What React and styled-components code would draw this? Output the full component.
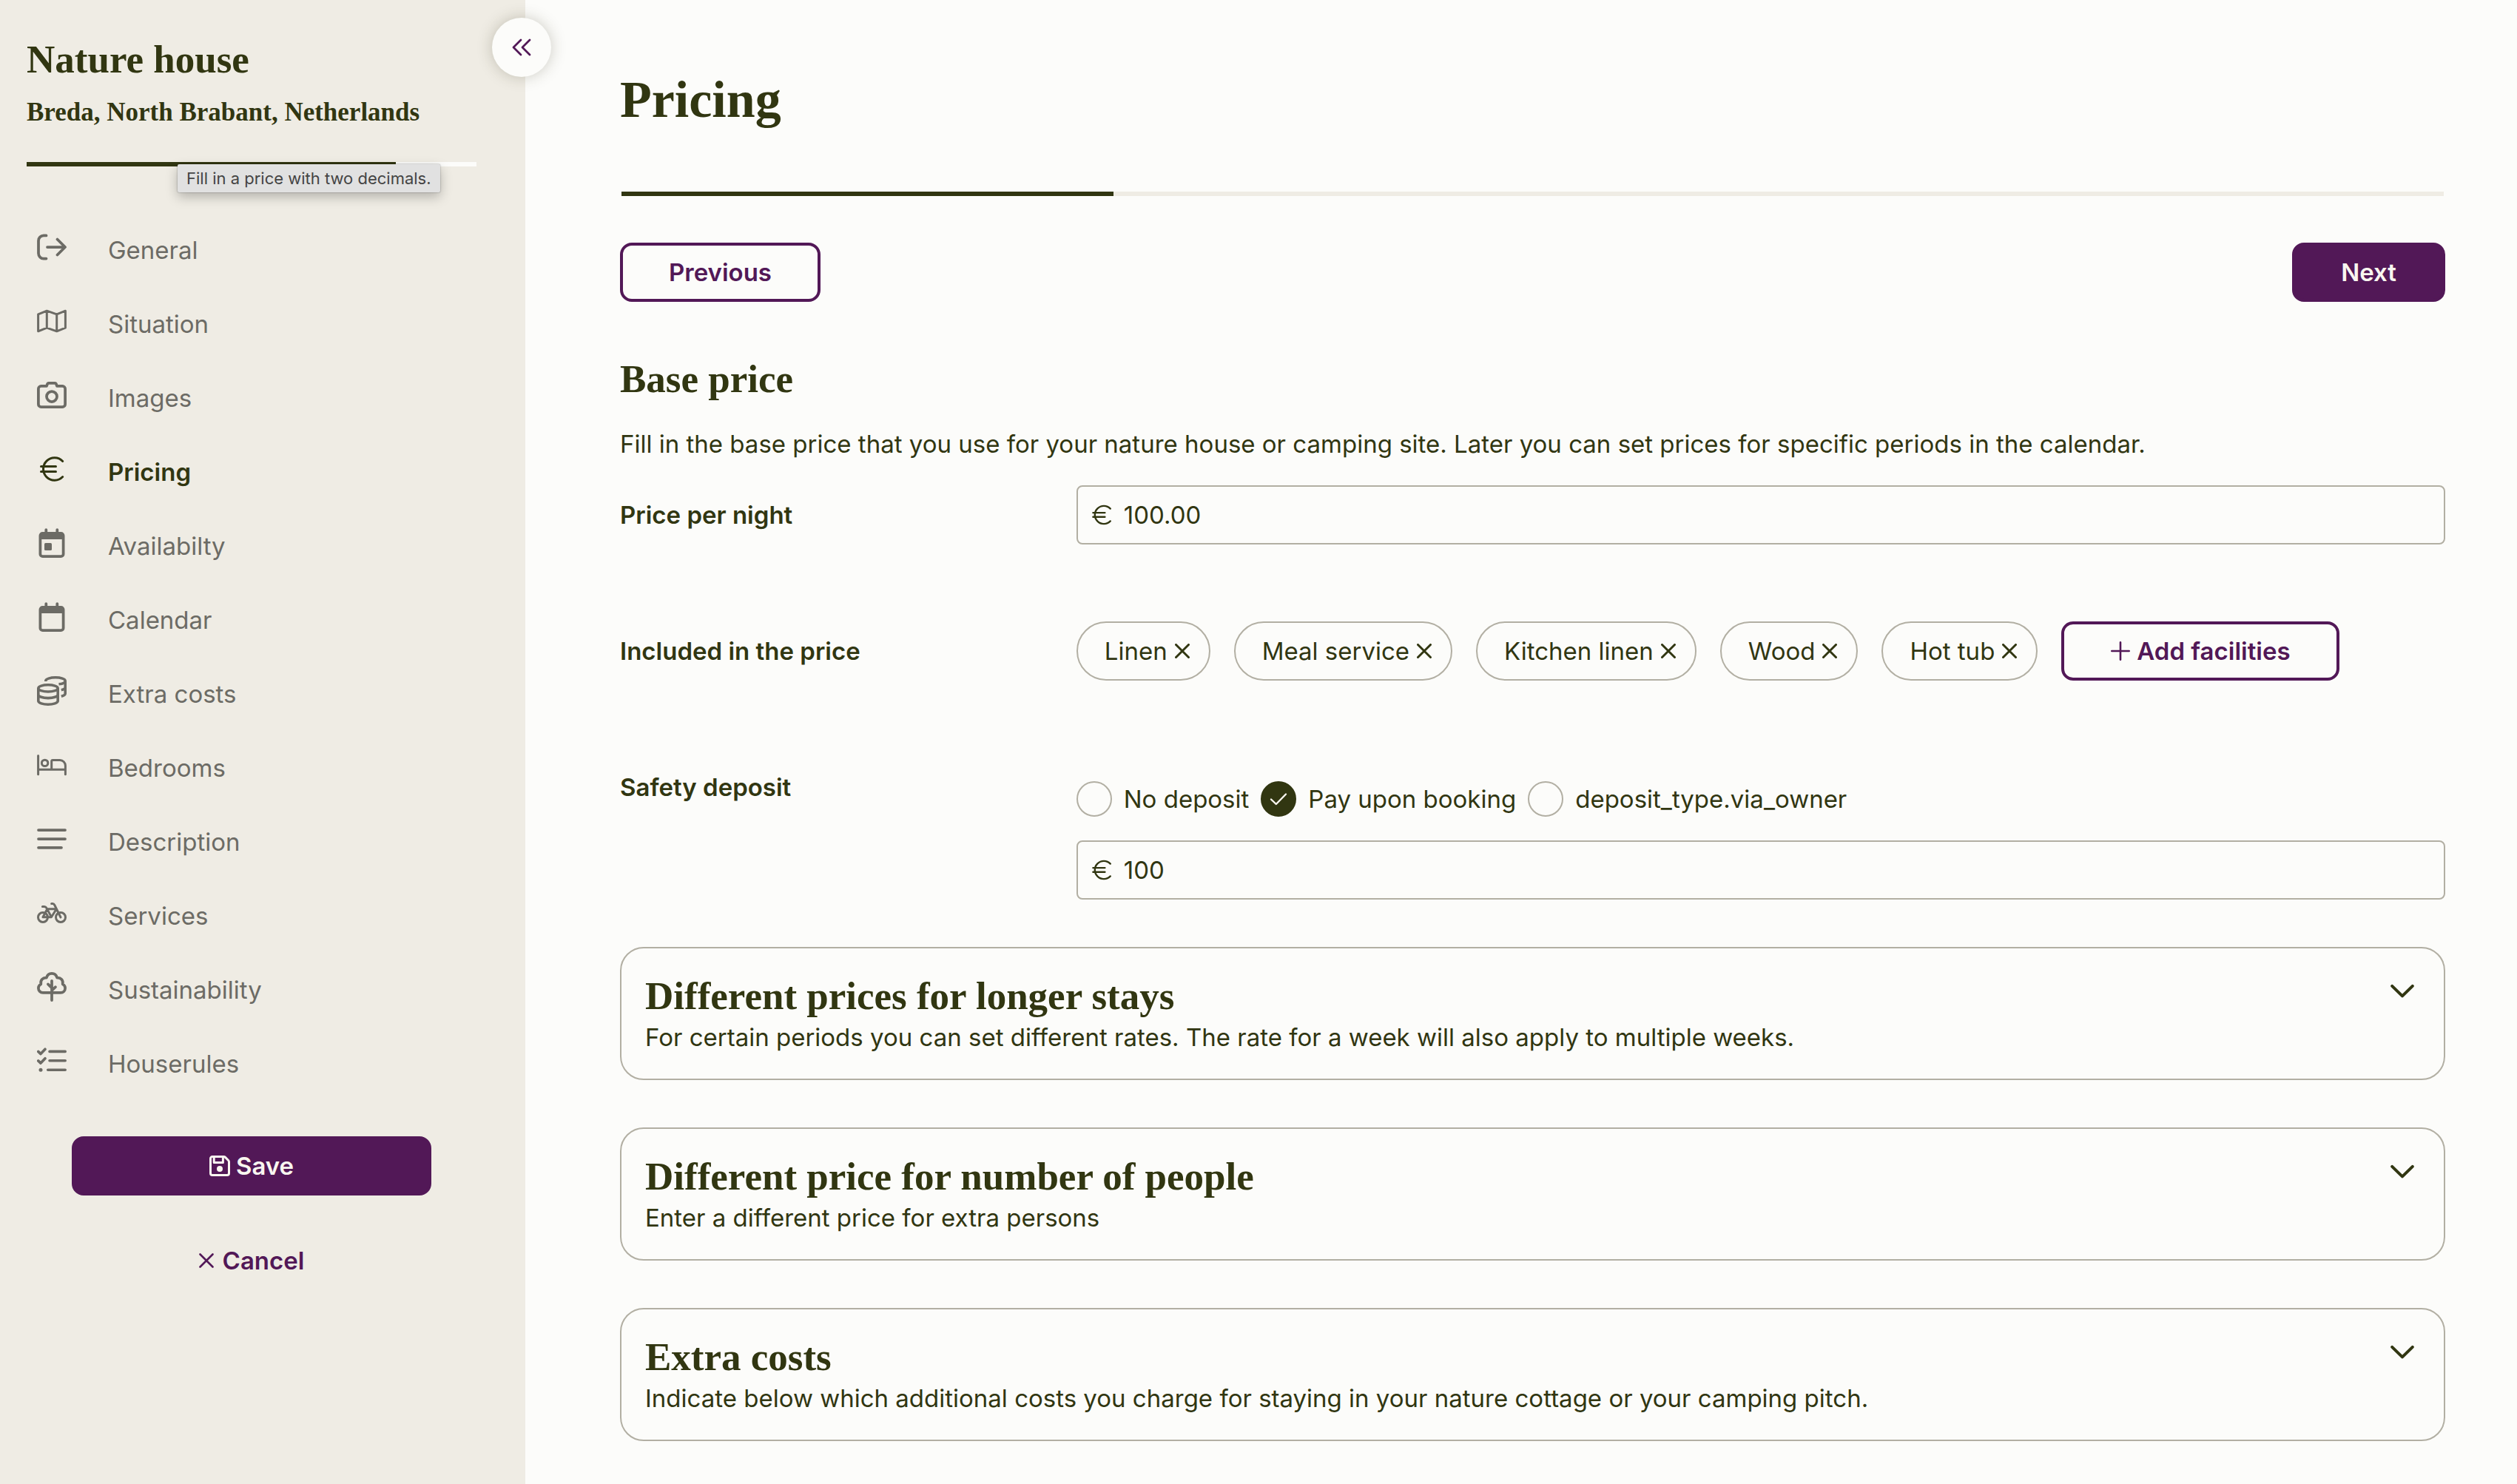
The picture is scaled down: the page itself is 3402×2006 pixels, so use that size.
import React, { useState } from 'react';
import styled, { createGlobalStyle, css } from 'styled-components';

const colors = {
  page: '#fcfcfa',
  sand: '#efece4',
  olive: '#313611',
  plum: '#521857',
  line: '#b2afa3',
  muted: '#6c6b65',
  cream: '#f9f6f0'
};

const menuItems = [
  { id: 'general', label: 'General', Icon: ExitIcon },
  { id: 'situation', label: 'Situation', Icon: MapIcon },
  { id: 'images', label: 'Images', Icon: CameraIcon },
  { id: 'pricing', label: 'Pricing', Icon: EuroIcon },
  { id: 'availability', label: 'Availabilty', Icon: CalendarDayIcon },
  { id: 'calendar', label: 'Calendar', Icon: CalendarIcon },
  { id: 'extra-costs', label: 'Extra costs', Icon: CoinsIcon },
  { id: 'bedrooms', label: 'Bedrooms', Icon: BedIcon },
  { id: 'description', label: 'Description', Icon: TextIcon },
  { id: 'services', label: 'Services', Icon: BikeIcon },
  { id: 'sustainability', label: 'Sustainability', Icon: TreeIcon },
  { id: 'houserules', label: 'Houserules', Icon: ListCheckIcon }
];

const depositTypes = [
  { value: 'none', label: 'No deposit' },
  { value: 'booking', label: 'Pay upon booking' },
  { value: 'owner', label: 'deposit_type.via_owner' }
];

const priceCards = [
  {
    title: 'Different prices for longer stays',
    text: 'For certain periods you can set different rates. The rate for a week will also apply to multiple weeks.'
  },
  {
    title: 'Different price for number of people',
    text: 'Enter a different price for extra persons'
  },
  {
    title: 'Extra costs',
    text: 'Indicate below which additional costs you charge for staying in your nature cottage or your camping pitch.'
  }
];

function App() {
  const [facilities, setFacilities] = useState(['Linen', 'Meal service', 'Kitchen linen', 'Wood', 'Hot tub']);
  const [price, setPrice] = useState('100.00');
  const [depositType, setDepositType] = useState('booking');
  const [deposit, setDeposit] = useState('100');

  const removeFacility = (name) => {
    setFacilities(facilities.filter((item) => item !== name));
  };

  return (
    <>
      <GlobalStyle />
      <StPage>
        <StSidebar>
          <StHouseName>Nature house</StHouseName>
          <StLocation>Breda, North Brabant, Netherlands</StLocation>
          <StProgress $track={colors.page}>
            <StProgressFill style={{ width: '82%' }} />
          </StProgress>
          <nav>
            <StMenu>
              {menuItems.map(({ id, label, Icon }) => (
                <li key={id}>
                  <StMenuLink href={`#${id}`} $active={id === 'pricing'}>
                    <Icon />
                    <span>{label}</span>
                  </StMenuLink>
                </li>
              ))}
            </StMenu>
          </nav>
          <StActions>
            <StSaveButton type="button">
              <SaveIcon />
              Save
            </StSaveButton>
            <StCancelButton type="button">
              <CrossIcon width={2.6} />
              Cancel
            </StCancelButton>
          </StActions>
          <StCollapseButton type="button" aria-label="Collapse menu">
            <DoubleChevronIcon />
          </StCollapseButton>
          <StTooltip role="tooltip">Fill in a price with two decimals.</StTooltip>
        </StSidebar>

        <StMain>
          <StTitle>Pricing</StTitle>
          <StMainProgress $track={colors.sand}>
            <StProgressFill style={{ width: '27%' }} />
          </StMainProgress>
          <StStepButtons>
            <StOutlineButton type="button">Previous</StOutlineButton>
            <StPrimaryButton type="button">Next</StPrimaryButton>
          </StStepButtons>

          <StSectionTitle>Base price</StSectionTitle>
          <StIntro>
            Fill in the base price that you use for your nature house or camping site. Later you can set prices for
            specific periods in the calendar.
          </StIntro>

          <StForm>
            <StFormRow>
              <StLabel htmlFor="price">Price per night</StLabel>
              <StInputBox>
                <EuroIcon size={32} />
                <StInput id="price" type="text" value={price} onChange={(e) => setPrice(e.target.value)} />
              </StInputBox>
            </StFormRow>

            <StFormRow>
              <StLabel as="span">Included in the price</StLabel>
              <StChips>
                {facilities.map((name) => (
                  <StChip key={name}>
                    {name}
                    <StChipButton type="button" aria-label={`Remove ${name}`} onClick={() => removeFacility(name)}>
                      <CrossIcon width={3} />
                    </StChipButton>
                  </StChip>
                ))}
                <StOutlineButton type="button">
                  <PlusIcon />
                  Add facilities
                </StOutlineButton>
              </StChips>
            </StFormRow>

            <StFormRow>
              <StLabel htmlFor="deposit">Safety deposit</StLabel>
              <div>
                <StRadios>
                  {depositTypes.map(({ value, label }) => (
                    <StRadioLabel key={value}>
                      <StRadioWrap>
                        <StRadio
                          type="radio"
                          name="depositType"
                          checked={depositType === value}
                          onChange={() => setDepositType(value)}
                        />
                        {depositType === value && <CheckIcon />}
                      </StRadioWrap>
                      {label}
                    </StRadioLabel>
                  ))}
                </StRadios>
                <StInputBox>
                  <EuroIcon size={32} />
                  <StInput id="deposit" type="text" value={deposit} onChange={(e) => setDeposit(e.target.value)} />
                </StInputBox>
              </div>
            </StFormRow>
          </StForm>

          <StCards>
            {priceCards.map(({ title, text }) => (
              <StCard key={title}>
                <div>
                  <StCardTitle>{title}</StCardTitle>
                  <StCardText>{text}</StCardText>
                </div>
                <StToggleButton type="button" aria-label={`Open ${title}`} aria-expanded="false">
                  <ChevronIcon />
                </StToggleButton>
              </StCard>
            ))}
          </StCards>
        </StMain>
      </StPage>
    </>
  );
}

export default App;

/* icons */
function Svg({ size = 40, box = 40, stroke = 3.75, children }) {
  return (
    <svg
      width={size}
      height={size}
      viewBox={`0 0 ${box} ${box}`}
      fill="none"
      stroke="currentColor"
      strokeWidth={stroke}
      strokeLinecap="round"
      strokeLinejoin="round"
      aria-hidden="true"
    >
      {children}
    </svg>
  );
}

function ExitIcon() {
  return (
    <Svg>
      <path d="M12.5 4.4H9A7 7 0 0 0 2 11.4V28.6A7 7 0 0 0 9 35.6H12.5M14 20H37.5M27.5 9.5L38 20L27.5 30.5" />
    </Svg>
  );
}

function MapIcon() {
  return (
    <Svg stroke={3}>
      <path d="M1.6 10.8L13.3 6.2L26.7 10.8L38.4 6.2V29.2L26.7 33.8L13.3 29.2L1.6 33.8ZM13.3 6.2V29.2M26.7 10.8V33.8" />
    </Svg>
  );
}

function CameraIcon() {
  return (
    <Svg>
      <path d="M5.6 7.9H13L14.2 4.8Q14.6 3.9 15.6 3.9H24.4Q25.4 3.9 25.8 4.8L27 7.9H34.4A3.7 3.7 0 0 1 38.1 11.6V32.4A3.7 3.7 0 0 1 34.4 36.1H5.6A3.7 3.7 0 0 1 1.9 32.4V11.6A3.7 3.7 0 0 1 5.6 7.9Z" />
      <circle cx="20" cy="22" r="7" />
    </Svg>
  );
}

function EuroIcon({ size }) {
  return (
    <Svg size={size} stroke={3}>
      <path d="M34.7 9.5A15.2 15.2 0 1 0 34.7 30.5M5.5 16.4H25.5M5.5 23.4H25.5" />
    </Svg>
  );
}

function CalendarIcon({ children }) {
  return (
    <Svg>
      <rect x="4.4" y="6.9" width="31.2" height="31.2" rx="3.2" />
      <path d="M12.3 2V7M27.3 2V7" />
      <path d="M4.4 8H35.6V15H4.4Z" fill="currentColor" stroke="none" />
      {children}
    </Svg>
  );
}

function CalendarDayIcon() {
  return (
    <CalendarIcon>
      <rect x="10" y="20" width="10" height="10" rx="1.6" fill="currentColor" stroke="none" />
    </CalendarIcon>
  );
}

function CoinsIcon() {
  return (
    <Svg stroke={3.6}>
      <g strokeLinecap="butt">
        <ellipse cx="15" cy="16.4" rx="13.2" ry="4.6" />
        <path d="M1.8 16.4V33.6C1.8 36.2 7.8 38.2 15 38.2S28.2 36.2 28.2 33.6V16.4M1.8 25C1.8 27.6 7.8 29.6 15 29.6S28.2 27.6 28.2 25" />
        <path d="M11.8 7V6.2C11.8 3.8 17.8 1.8 25 1.8S38.2 3.8 38.2 6.4V23.5C38.2 25 36 26.4 32.8 27.3M29.5 10.8C35 10.2 38.2 8.6 38.2 6.4M32.8 18.8C36 18 38.2 16.8 38.2 15" />
      </g>
    </Svg>
  );
}

function BedIcon() {
  return (
    <Svg stroke={3}>
      <path d="M1.6 7.6V32.8M1.6 26.3H38.4M38.4 32.8V21A7.4 7.4 0 0 0 31 13.6H21.2Q19.7 13.6 19.7 15.1V26.3" />
      <circle cx="10.6" cy="17.4" r="4.2" />
    </Svg>
  );
}

function TextIcon() {
  return (
    <Svg>
      <path d="M2 8.1H38M2 20H38M2 31.8H33" />
    </Svg>
  );
}

function BikeIcon() {
  return (
    <Svg stroke={3}>
      <circle cx="8" cy="26" r="6.5" />
      <circle cx="32" cy="26" r="6.5" />
      <path d="M7.4 11.4H9.4Q11.8 11.4 13 13.6L19.4 25.4M19.6 7.5H21.2Q22.8 7.5 23.8 9.5L32 26M13.5 14.8H26.3L19.4 25.8H8L13.7 15" />
    </Svg>
  );
}

function TreeIcon() {
  return (
    <Svg>
      <path d="M8 27.9C4.6 27.9 1.9 25.2 1.9 21.8C1.9 19.4 3.3 17.4 5.3 16.4C4.2 11.2 8 7 12.9 7.6C13.8 4.2 16.6 1.9 20 1.9S26.2 4.2 27.1 7.6C32 7 35.8 11.2 34.7 16.4C36.7 17.4 38.1 19.4 38.1 21.8C38.1 25.2 35.4 27.9 32 27.9ZM20 11.8V38.1M14.9 16.4L20 21.4M25 20.2L20 25" />
    </Svg>
  );
}

function ListCheckIcon() {
  return (
    <Svg stroke={3.6}>
      <path d="M1.7 7.4L5 10.6L11 4.2M1.7 19.9L5 23.1L11 16.7M17 7.4H38.2M17 19.8H38.2M14.7 32.3H38.2" />
      <circle cx="5" cy="32.3" r="2.5" fill="currentColor" stroke="none" />
    </Svg>
  );
}

function SaveIcon() {
  return (
    <Svg size={28} box={28} stroke={3}>
      <path d="M4 1.5H19.4Q20.6 1.5 21.5 2.4L25.6 6.5Q26.5 7.4 26.5 8.6V24A2.5 2.5 0 0 1 24 26.5H4A2.5 2.5 0 0 1 1.5 24V4A2.5 2.5 0 0 1 4 1.5ZM6.2 2V9.6H18.4V2" />
      <circle cx="14" cy="18" r="4" fill="currentColor" stroke="none" />
    </Svg>
  );
}

function CrossIcon({ width }) {
  return (
    <Svg size={20} box={20} stroke={width}>
      <path d="M1.5 1.5L18.5 18.5M18.5 1.5L1.5 18.5" />
    </Svg>
  );
}

function PlusIcon() {
  return (
    <Svg size={28} box={28} stroke={2.6}>
      <path d="M14 2.3V25.7M2.3 14H25.7" />
    </Svg>
  );
}

function CheckIcon() {
  return (
    <Svg size={24} box={24} stroke={2.4}>
      <path d="M2 12.5L8.8 19L22 5.5" />
    </Svg>
  );
}

function DoubleChevronIcon() {
  return (
    <Svg size={26} box={26} stroke={2.8}>
      <path d="M12 3L2 13L12 23M24 3L14 13L24 23" />
    </Svg>
  );
}

function ChevronIcon() {
  return (
    <Svg size={32} box={32} stroke={4}>
      <path d="M2.2 8.8L16 22.4L29.8 8.8" />
    </Svg>
  );
}

const GlobalStyle = createGlobalStyle`
  *, *::before, *::after {
    box-sizing: border-box;
  }
  body {
    margin: 0;
    background-color: ${colors.page};
    color: ${colors.olive};
    font-family: Inter, 'Liberation Sans', sans-serif;
    font-size: 33px;
    line-height: 48px;
  }
  h1, h2, h3, p, ul {
    margin: 0;
    padding: 0;
  }
  ul {
    list-style: none;
  }
  button, input {
    font: inherit;
    color: inherit;
  }
  button {
    cursor: pointer;
  }
  svg {
    flex-shrink: 0;
    display: block;
  }
`;

const headingFont = css`
  font-family: 'Liberation Serif', serif;
  font-weight: 700;
`;

const StPage = styled.div`
  display: grid;
  grid-template-columns: 710px 1fr;
  min-height: 100vh;
`;

const StSidebar = styled.aside`
  position: relative;
  padding: 48px 66px 48px 36px;
  background-color: ${colors.sand};
`;

const StHouseName = styled.h2`
  ${headingFont}
  font-size: 53px;
  line-height: 64px;
`;

const StLocation = styled.p`
  ${headingFont}
  margin-top: 18px;
  font-size: 35px;
  line-height: 44px;
  white-space: nowrap;
`;

const StProgress = styled.div`
  height: 6px;
  margin: 45px 0 59px;
  background-color: ${(props) => props.$track};
`;

const StMainProgress = styled(StProgress)`
  margin: 80px 2px 63px;
`;

const StProgressFill = styled.div`
  height: 100%;
  background-color: ${colors.olive};
`;

const StMenu = styled.ul`
  padding-left: 14px;
`;

const StMenuLink = styled.a`
  display: flex;
  align-items: center;
  gap: 56px;
  height: 100px;
  color: ${(props) => (props.$active ? colors.olive : colors.muted)};
  font-weight: ${(props) => (props.$active ? 600 : 400)};
  text-decoration: none;

  span {
    padding-top: 8px;
  }
`;

const StActions = styled.div`
  display: flex;
  flex-direction: column;
  align-items: center;
  gap: 48px;
  margin-top: 52px;
`;

const StButton = styled.button`
  display: flex;
  align-items: center;
  justify-content: center;
  gap: 8px;
  height: 80px;
  padding: 0 62px;
  border: 4px solid ${colors.plum};
  border-radius: 16px;
  font-weight: 600;
  white-space: nowrap;
`;

const StPrimaryButton = styled(StButton)`
  background-color: ${colors.plum};
  color: ${colors.cream};
`;

const StOutlineButton = styled(StButton)`
  background-color: transparent;
  color: ${colors.plum};
`;

const StSaveButton = styled(StPrimaryButton)`
  width: 80%;
`;

const StCancelButton = styled(StButton)`
  gap: 12px;
  border-color: transparent;
  background-color: transparent;
  color: ${colors.plum};
`;

const StCollapseButton = styled.button`
  position: absolute;
  top: 24px;
  right: -35px;
  display: flex;
  align-items: center;
  justify-content: center;
  width: 80px;
  height: 80px;
  padding: 0;
  border: 0;
  border-radius: 50%;
  background-color: ${colors.page};
  color: ${colors.plum};
  box-shadow: 0 0 20px rgba(60, 55, 30, 0.25);
`;

const StTooltip = styled.div`
  position: absolute;
  top: 222px;
  left: 240px;
  padding: 0 12px;
  border-radius: 2px;
  background-color: #e1e1e1;
  color: #444444;
  font-size: 22px;
  line-height: 38px;
  white-space: nowrap;
  box-shadow: 0 0 2px rgba(0, 0, 0, 0.4), 0 6px 16px rgba(0, 0, 0, 0.25);
`;

const StMain = styled.main`
  padding: 91px 97px 58px 128px;
`;

const StTitle = styled.h1`
  ${headingFont}
  font-size: 70px;
  line-height: 88px;
`;

const StStepButtons = styled.div`
  display: flex;
  justify-content: space-between;
`;

const StSectionTitle = styled.h2`
  ${headingFont}
  margin-top: 72px;
  font-size: 53px;
  line-height: 64px;
`;

const StIntro = styled.p`
  margin: 32px 0;
`;

const StForm = styled.div`
  display: flex;
  flex-direction: column;
  gap: 104px;
`;

const StFormRow = styled.div`
  display: grid;
  grid-template-columns: 1fr 3fr;
`;

const StLabel = styled.label`
  align-self: start;
  line-height: 80px;
  font-weight: 600;
`;

const StInputBox = styled.div`
  display: flex;
  align-items: center;
  gap: 14px;
  height: 80px;
  padding: 0 16px;
  border: 2px solid ${colors.line};
  border-radius: 8px;
`;

const StInput = styled.input`
  flex: 1;
  min-width: 0;
  padding: 0;
  border: 0;
  outline: none;
  background-color: transparent;
`;

const StChips = styled.ul`
  display: flex;
  flex-wrap: wrap;
  gap: 32px;
`;

const StChip = styled.li`
  display: flex;
  align-items: center;
  gap: 10px;
  height: 80px;
  padding: 0 26px 0 36px;
  border: 2px solid ${colors.line};
  border-radius: 40px;
`;

const StChipButton = styled.button`
  padding: 0;
  border: 0;
  background-color: transparent;
`;

const StRadios = styled.div`
  display: flex;
  gap: 16px;
  padding: 32px 0;
`;

const StRadioLabel = styled.label`
  display: flex;
  align-items: center;
  gap: 16px;
`;

const StRadioWrap = styled.span`
  position: relative;
  display: block;
  width: 48px;
  height: 48px;
  color: ${colors.cream};

  svg {
    position: absolute;
    top: 12px;
    left: 12px;
    pointer-events: none;
  }
`;

const StRadio = styled.input`
  appearance: none;
  display: block;
  width: 48px;
  height: 48px;
  margin: 0;
  border: 2px solid ${colors.line};
  border-radius: 50%;

  &:checked {
    border-color: ${colors.olive};
    background-color: ${colors.olive};
  }
`;

const StCards = styled.div`
  display: flex;
  flex-direction: column;
  gap: 64px;
  margin-top: 64px;
`;

const StCard = styled.section`
  display: flex;
  align-items: flex-start;
  justify-content: space-between;
  padding: 34px 40px 32px 32px;
  border: 2px solid ${colors.line};
  border-radius: 32px;
`;

const StCardTitle = styled.h3`
  ${headingFont}
  font-size: 53px;
  line-height: 60px;
`;

const StCardText = styled.p`
  margin-top: 2px;
`;

const StToggleButton = styled.button`
  margin-top: 8px;
  padding: 0;
  border: 0;
  background-color: transparent;
`;
